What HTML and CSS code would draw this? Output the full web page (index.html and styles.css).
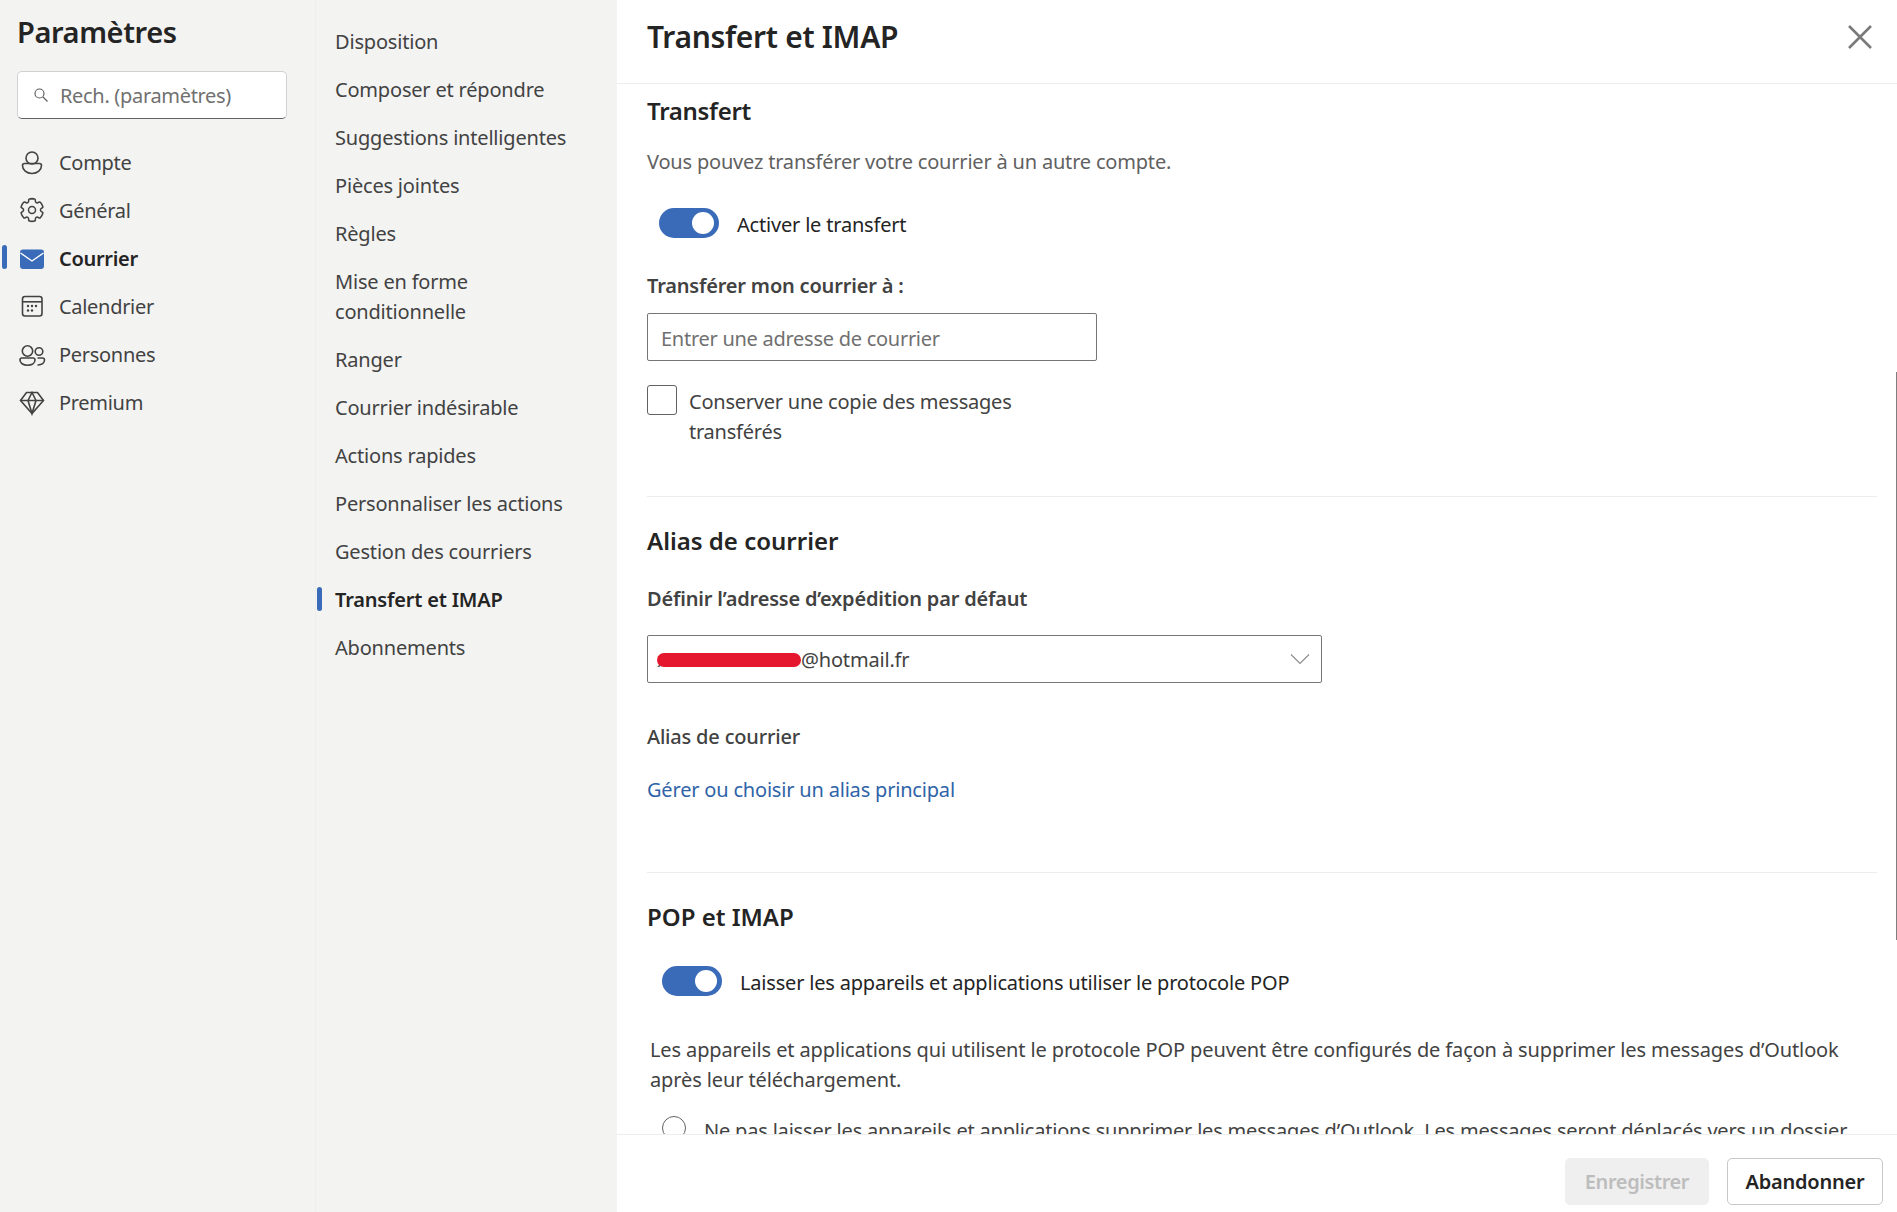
FILE: index.html
```html
<!DOCTYPE html>
<html lang="fr">
<head>
<meta charset="utf-8">
<title>Paramètres</title>
<link rel="stylesheet" href="styles.css">
</head>
<body>
<div class="app">
  <aside class="side">
    <h1 class="side-title">Paramètres</h1>
    <div class="search">
      <svg class="search-icon" viewBox="0 0 16 16"><circle cx="6.5" cy="6.5" r="4.5"/><path d="M10 10l4.5 4.5"/></svg>
      <span class="txt">Rech. (paramètres)</span>
    </div>
    <nav class="nav">
      <div class="nav-item">
        <svg class="ico" viewBox="0 0 28 28"><circle cx="14" cy="10" r="6"/><path d="M4.5 17.5a2 2 0 0 1 2-2h15a2 2 0 0 1 2 2c0 4.500-4 8-9.500 8s-9.500-3.500-9.500-8z"/></svg>
        <span class="txt">Compte</span>
      </div>
      <div class="nav-item">
        <svg class="ico" viewBox="0 0 24 24"><path d="M12.012 2.25c.734.008 1.465.093 2.182.253a.75.75 0 0 1 .582.649l.17 1.527a1.384 1.384 0 0 0 1.927 1.116l1.401-.615a.75.75 0 0 1 .85.174 9.792 9.792 0 0 1 2.204 3.792.75.75 0 0 1-.271.825l-1.242.916a1.381 1.381 0 0 0 0 2.226l1.243.915a.75.75 0 0 1 .272.826 9.797 9.797 0 0 1-2.204 3.792.75.75 0 0 1-.848.175l-1.407-.617a1.38 1.38 0 0 0-1.926 1.114l-.169 1.526a.75.75 0 0 1-.572.647 9.518 9.518 0 0 1-4.406 0 .75.75 0 0 1-.572-.647l-.168-1.524a1.382 1.382 0 0 0-1.926-1.11l-1.406.616a.75.75 0 0 1-.849-.175 9.798 9.798 0 0 1-2.204-3.796.75.75 0 0 1 .272-.826l1.243-.916a1.38 1.38 0 0 0 0-2.226l-1.243-.914a.75.75 0 0 1-.271-.826 9.793 9.793 0 0 1 2.204-3.792.75.75 0 0 1 .85-.174l1.4.615a1.387 1.387 0 0 0 1.93-1.118l.17-1.526a.75.75 0 0 1 .583-.65c.717-.159 1.45-.243 2.201-.252z"/><circle cx="12" cy="12" r="3"/></svg>
        <span class="txt">Général</span>
      </div>
      <div class="nav-item is-active">
        <svg class="ico" viewBox="0 0 28 28"><rect class="mail-body" x="2" y="5.500" width="24" height="19.500" rx="3"/><path class="mail-flap" d="M2.500 9L14 17l11.500-8"/></svg>
        <span class="txt">Courrier</span>
      </div>
      <div class="nav-item">
        <svg class="ico" viewBox="0 0 28 28"><rect x="4.500" y="4.500" width="19.500" height="19.500" rx="2.500"/><path d="M4.500 9.800h19.500"/><g class="ico-dots"><circle cx="10" cy="14" r="1.200"/><circle cx="14" cy="14" r="1.200"/><circle cx="18" cy="14" r="1.200"/><circle cx="10" cy="18.500" r="1.200"/><circle cx="14" cy="18.500" r="1.200"/></g></svg>
        <span class="txt">Calendrier</span>
      </div>
      <div class="nav-item">
        <svg class="ico" viewBox="0 0 28 28"><circle cx="9.500" cy="11" r="5.200"/><circle cx="21" cy="11.500" r="3.800"/><path d="M2 20a2 2 0 0 1 2-2h11a2 2 0 0 1 2 2c0 3-3 5.200-7.500 5.200S2 23 2 20z"/><path d="M19.500 18h5a2 2 0 0 1 2 2c0 3-2.500 5.200-7 5"/></svg>
        <span class="txt">Personnes</span>
      </div>
      <div class="nav-item">
        <svg class="ico" viewBox="0 0 28 28"><path d="M8.500 4.500h11l6 8L14 25.500 2.500 12.500z"/><path d="M2.500 12.500h23M10 12.500l4-8 4 8M10 12.500l4 13 4-13"/></svg>
        <span class="txt">Premium</span>
      </div>
    </nav>
  </aside>

  <div class="sub">
    <div class="sub-item">Disposition</div>
    <div class="sub-item">Composer et répondre</div>
    <div class="sub-item">Suggestions intelligentes</div>
    <div class="sub-item">Pièces jointes</div>
    <div class="sub-item">Règles</div>
    <div class="sub-item">Mise en forme conditionnelle</div>
    <div class="sub-item">Ranger</div>
    <div class="sub-item">Courrier indésirable</div>
    <div class="sub-item">Actions rapides</div>
    <div class="sub-item">Personnaliser les actions</div>
    <div class="sub-item">Gestion des courriers</div>
    <div class="sub-item is-active">Transfert et IMAP</div>
    <div class="sub-item">Abonnements</div>
  </div>

  <main class="main">
    <header class="main-head">
      <h2 class="main-title">Transfert et IMAP</h2>
      <svg class="close" viewBox="0 0 24 24"><path d="M1 1l22 22M23 1L1 23"/></svg>
    </header>

    <div class="content">
      <h3 class="sec-title first">Transfert</h3>
      <p class="muted">Vous pouvez transférer votre courrier à un autre compte.</p>
      <div class="toggle-row one">
        <span class="toggle"><span class="knob"></span></span>
        <span class="txt">Activer le transfert</span>
      </div>
      <div class="label-strong forward">Transférer mon courrier à :</div>
      <div class="field email"><span class="txt">Entrer une adresse de courrier</span></div>
      <div class="check-row">
        <span class="checkbox"></span>
        <span class="check-text">Conserver une copie des messages transférés</span>
      </div>

      <hr class="divider d1">

      <h3 class="sec-title">Alias de courrier</h3>
      <div class="label-strong def">Définir l’adresse d’expédition par défaut</div>
      <div class="field select">
        <span class="addr txt"><span class="masked">xxxxxxxxxxxxx<span class="scribble"></span></span>@hotmail.fr</span>
        <svg class="chev" viewBox="0 0 20 12"><path d="M1 1.500l9 9 9-9"/></svg>
      </div>
      <div class="label-mid">Alias de courrier</div>
      <a class="link" href="#">Gérer ou choisir un alias principal</a>

      <hr class="divider d2">

      <h3 class="sec-title">POP et IMAP</h3>
      <div class="toggle-row two">
        <span class="toggle"><span class="knob"></span></span>
        <span class="txt">Laisser les appareils et applications utiliser le protocole POP</span>
      </div>
      <p class="para">Les appareils et applications qui utilisent le protocole POP peuvent être configurés de façon à supprimer les messages d’Outlook après leur téléchargement.</p>
      <div class="radio-row">
        <span class="radio"></span>
        <span class="txt">Ne pas laisser les appareils et applications supprimer les messages d’Outlook. Les messages seront déplacés vers un dossier</span>
      </div>
      <span class="scrollbar"></span>
    </div>

    <footer class="main-foot">
      <button class="btn disabled">Enregistrer</button>
      <button class="btn">Abandonner</button>
    </footer>
  </main>
</div>
</body>
</html>
```
FILE: styles.css
```css
* { box-sizing: border-box; }
html, body { margin: 0; height: 100%; }
body {
  font-family: "Noto Sans", "Open Sans", "Liberation Sans", sans-serif;
  font-size: 20px;
  line-height: 30px;
  letter-spacing: -.19px;
  color: #424242;
  background: #fff;
  overflow: hidden;
}
.app { display: flex; height: 1212px; }
.txt { padding-top: 2px; }

.side { width: 316px; flex: none; background: #f3f3f2; border-right: 1px solid #eeeeed; padding: 13px 0 0 0; }
.side-title { margin: 0 0 0 17px; font-size: 29px; line-height: 38px; font-weight: 600; color: #242424; letter-spacing: -.4px; }
.search { margin: 20px 0 0 17px; width: 270px; height: 48px; background: #fff; border: 1px solid #d1d1d1; border-bottom-color: #616161; border-radius: 5px; display: flex; align-items: center; padding-left: 15px; color: #707070; gap: 11px; letter-spacing: -.32px; }
.search-icon { width: 16px; height: 16px; fill: none; stroke: #616161; stroke-width: 1.2; }
.nav { margin-top: 19px; letter-spacing: -.3px; }
.nav-item { position: relative; height: 48px; display: flex; align-items: center; padding-left: 18px; gap: 13px; }
.nav-item.is-active { font-weight: 600; color: #242424; }
.nav-item.is-active::before { content: ""; position: absolute; left: 2px; top: 11px; width: 5px; height: 24px; border-radius: 3px; background: #3a6bb8; }
.ico { width: 28px; height: 28px; flex: none; fill: none; stroke: #424242; stroke-width: 1.6; }
svg.ico[viewBox="0 0 24 24"] { stroke-width: 1.3; }
.mail-body { fill: #3a6bb8; stroke: none; }
.mail-flap { stroke: #fff; stroke-width: 1.4; }
.ico-dots circle { fill: #424242; stroke: none; }

.sub { width: 301px; flex: none; background: #f3f3f2; padding: 18px 20px 0 1px; }
.sub-item { position: relative; padding: 9px 0 9px 18px; }
.sub-item.is-active { font-weight: 600; color: #242424; }
.sub-item.is-active::before { content: ""; position: absolute; left: 0; top: 11px; width: 5px; height: 24px; border-radius: 3px; background: #3a6bb8; }

.main { flex: 1; min-width: 0; display: flex; flex-direction: column; }
.main-head { height: 84px; flex: none; border-bottom: 1px solid #ededed; display: flex; align-items: center; justify-content: space-between; padding: 0 25px 9px 30px; }
.main-title { margin: 0; font-size: 30px; line-height: 44px; font-weight: 600; color: #242424; letter-spacing: -.3px; }
.close { width: 24px; height: 24px; fill: none; stroke: #7a7a7a; stroke-width: 2.6; }

.content { position: relative; flex: 1; min-height: 0; overflow: hidden; padding: 0 20px 0 30px; }
.sec-title { margin: 27px 0 0; font-size: 24px; line-height: 34px; font-weight: 600; color: #242424; letter-spacing: 0; }
.sec-title.first { margin-top: 10px; letter-spacing: -.3px; }
.muted { margin: 19px 0 0; color: #616161; }
.toggle-row { display: flex; align-items: center; height: 30px; color: #242424; gap: 18px; }
.toggle-row .txt { padding-top: 4px; }
.toggle-row.one { margin: 31px 0 0 12px; }
.toggle-row.two { margin: 32px 0 0 15px; }
.toggle { width: 60px; height: 30px; border-radius: 15px; background: #3a6bb8; display: flex; align-items: center; justify-content: flex-end; padding-right: 5px; flex: none; }
.knob { width: 22px; height: 22px; border-radius: 50%; background: #fff; }
.label-strong { font-weight: 600; color: #424242; }
.forward { margin-top: 33px; }
.def { margin-top: 26px; }
.field { height: 48px; border: 1px solid #767676; border-radius: 2px; display: flex; align-items: center; padding: 0 13px; }
.email { width: 450px; margin-top: 12px; color: #707070; letter-spacing: -.27px; }
.email .txt { padding-top: 4px; }
.check-row { display: flex; margin-top: 24px; gap: 12px; }
.checkbox { width: 30px; height: 30px; border: 1px solid #616161; border-radius: 3px; flex: none; }
.check-text { width: 370px; padding-top: 2px; letter-spacing: -.23px; }
.divider { border: 0; border-top: 1px solid #ededed; margin: 0; }
.d1 { margin-top: 49px; }
.d2 { margin-top: 67px; }
.select { width: 675px; margin-top: 21px; justify-content: space-between; padding: 0 11px 0 9px; color: #424242; }
.masked { position: relative; display: inline-block; width: 144px; overflow: visible; color: #5a5a5a; }
.scribble { position: absolute; left: 0; right: 0; top: 8px; height: 14px; border-radius: 7px; background: #e4172f; }
.chev { width: 20px; height: 12px; fill: none; stroke: #8a8a8a; stroke-width: 1.1; }
.label-mid { margin-top: 39px; font-weight: 500; color: #424242; }
.link { display: block; margin-top: 23px; color: #2f63a8; text-decoration: none; }
.para { margin: 39px 0 0 3px; color: #424242; letter-spacing: -.12px; }
.radio-row { display: flex; margin: 19px 0 0 15px; gap: 18px; white-space: nowrap; }
.radio { width: 24px; height: 24px; margin-top: 2px; border: 1px solid #616161; border-radius: 50%; flex: none; }
.scrollbar { position: absolute; top: 288px; right: 0; width: 1px; height: 568px; background: #7f7f7f; }

.main-foot { height: 78px; flex: none; border-top: 1px solid #ededed; display: flex; justify-content: flex-end; align-items: flex-start; gap: 18px; padding: 23px 14px 0 0; }
.btn { height: 47px; border-radius: 5px; font: inherit; letter-spacing: -.2px; font-weight: 600; border: 1px solid #c8c8c8; background: #fff; color: #242424; padding: 0; width: 156px; }
.btn.disabled { width: 144px; letter-spacing: -.4px; background: #efefef; border-color: #efefef; color: #bdbdbd; }
```
